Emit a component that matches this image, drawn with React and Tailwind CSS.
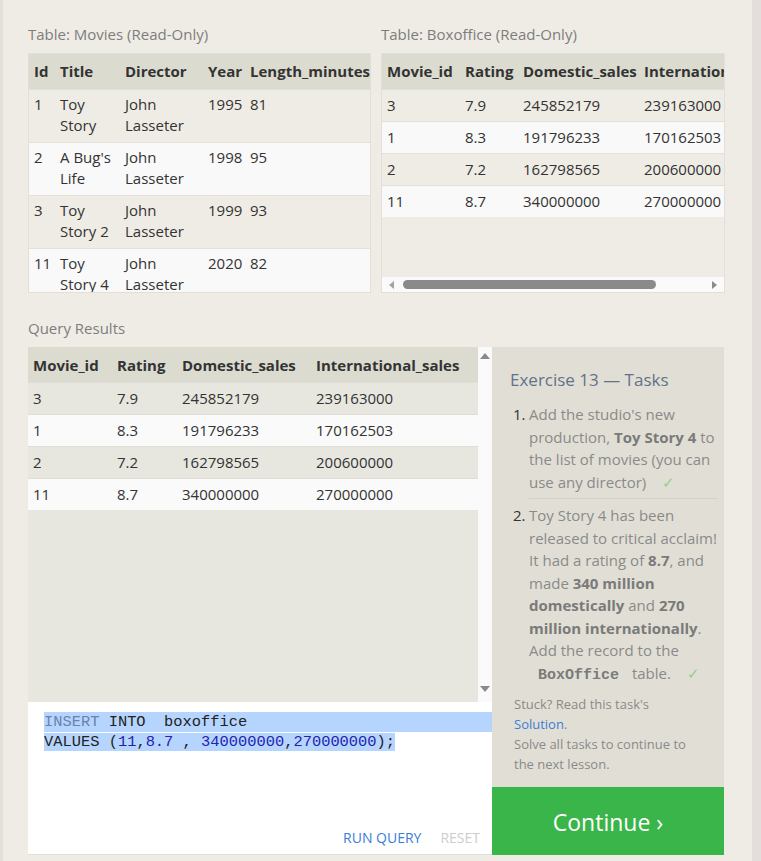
import React from 'react';

const MOVIES = [
  ['1', 'Toy Story', 'John Lasseter', '1995', '81'],
  ['2', "A Bug's Life", 'John Lasseter', '1998', '95'],
  ['3', 'Toy Story 2', 'John Lasseter', '1999', '93'],
  ['11', 'Toy Story 4', 'John Lasseter', '2020', '82'],
];

const BOXOFFICE = [
  ['3', '7.9', '245852179', '239163000'],
  ['1', '8.3', '191796233', '170162503'],
  ['2', '7.2', '162798565', '200600000'],
  ['11', '8.7', '340000000', '270000000'],
];

const sans = "font-['Open_Sans','Noto_Sans',sans-serif]";

function Label({ children }) {
  return <div className="mb-[8px] text-[15px] leading-[21px] text-[#7d7d7d]">{children}</div>;
}

function MoviesTable() {
  return (
    <div className="h-[240px] w-[343px] overflow-hidden border border-[#e2dfd8]">
      <table className="w-full table-fixed border-collapse text-[15px] leading-[21px] text-[#333]">
        <colgroup>
          <col className="w-[26px]" />
          <col className="w-[65px]" />
          <col className="w-[83px]" />
          <col className="w-[42px]" />
          <col />
        </colgroup>
        <thead>
          <tr className="bg-[#dcdbd0] text-left font-bold">
            {['Id', 'Title', 'Director', 'Year', 'Length_minutes'].map((h) => (
              <th key={h} className="whitespace-nowrap py-[7px] pl-[5px] pr-0 align-top">
                {h}
              </th>
            ))}
          </tr>
        </thead>
        <tbody>
          {MOVIES.map((row, i) => (
            <tr key={row[0]} className={`border-t border-[#e2e0d9] ${i % 2 ? 'bg-[#f9f9f9]' : 'bg-[#efece5]'}`}>
              {row.map((c, j) => (
                <td key={j} className="pb-[6px] pl-[5px] pr-[2px] pt-[4px] align-top">
                  {c}
                </td>
              ))}
            </tr>
          ))}
        </tbody>
      </table>
    </div>
  );
}

function BoxofficeTable() {
  return (
    <div className="flex h-[240px] w-[344px] flex-col border border-[#e2dfd8]">
      <div className="flex-1 overflow-hidden">
        <table className="w-[420px] table-fixed border-collapse text-[15px] leading-[21px] text-[#333]">
          <colgroup>
            <col className="w-[78px]" />
            <col className="w-[58px]" />
            <col className="w-[121px]" />
            <col />
          </colgroup>
          <thead>
            <tr className="bg-[#dcdbd0] text-left font-bold">
              {['Movie_id', 'Rating', 'Domestic_sales', 'International_sales'].map((h) => (
                <th key={h} className="whitespace-nowrap py-[7px] pl-[5px] pr-0">
                  {h}
                </th>
              ))}
            </tr>
          </thead>
          <tbody>
            {BOXOFFICE.map((row, i) => (
              <tr key={row[0]} className={`border-t border-[#e2e0d9] ${i % 2 ? 'bg-[#f9f9f9]' : 'bg-[#efece5]'}`}>
                {row.map((c, j) => (
                  <td key={j} className="py-[5px] pl-[5px]">
                    {c}
                  </td>
                ))}
              </tr>
            ))}
          </tbody>
        </table>
      </div>
      {/* horizontal scrollbar */}
      <div className="flex h-[15px] items-center bg-[#fafafa] px-[6px]">
        <svg width="8" height="8" viewBox="0 0 8 8" className="mr-[7px]">
          <path d="M6 0 L6 8 L1 4 Z" fill="#a3a3a3" />
        </svg>
        <div className="h-[9px] w-[253px] rounded-full bg-[#8a8a8a]" />
        <div className="flex-1" />
        <svg width="8" height="8" viewBox="0 0 8 8">
          <path d="M2 0 L2 8 L7 4 Z" fill="#8a8a8a" />
        </svg>
      </div>
    </div>
  );
}

function ResultsTable() {
  return (
    <div className="flex h-[355px] bg-[#e8e7df]">
      <div className="flex-1 overflow-hidden">
        <table className="w-full table-fixed border-collapse text-[15px] leading-[21px] text-[#333]">
          <colgroup>
            <col className="w-[84px]" />
            <col className="w-[65px]" />
            <col className="w-[134px]" />
            <col />
          </colgroup>
          <thead>
            <tr className="bg-[#dcdbd0] text-left font-bold">
              {['Movie_id', 'Rating', 'Domestic_sales', 'International_sales'].map((h) => (
                <th key={h} className="whitespace-nowrap pb-[6px] pl-[5px] pt-[8px]">
                  {h}
                </th>
              ))}
            </tr>
          </thead>
          <tbody>
            {BOXOFFICE.map((row, i) => (
              <tr key={row[0]} className={`border-t border-[#dfddd5] ${i % 2 ? 'bg-[#fafafa]' : 'bg-[#e8e7df]'}`}>
                {row.map((c, j) => (
                  <td key={j} className="py-[5px] pl-[5px]">
                    {c}
                  </td>
                ))}
              </tr>
            ))}
          </tbody>
        </table>
      </div>
      {/* vertical scrollbar */}
      <div className="flex w-[14px] flex-col items-center justify-between bg-[#fafafa] pb-[9px] pt-[5px]">
        <svg width="10" height="8" viewBox="0 0 10 8">
          <path d="M0 7 L10 7 L5 1 Z" fill="#8a8a8a" />
        </svg>
        <svg width="10" height="8" viewBox="0 0 10 8">
          <path d="M0 1 L10 1 L5 7 Z" fill="#8a8a8a" />
        </svg>
      </div>
    </div>
  );
}

function Editor() {
  return (
    <div className="flex h-[153px] flex-col border-b border-[#e2dfd8] bg-white">
      <div className="pl-[16px] pt-[10px] font-['Liberation_Mono',monospace] text-[15.4px] leading-[20px] text-[#222]">
        <div className="whitespace-pre bg-[#b5d5fe]">
          <span className="text-[#6a82ac]">INSERT</span> INTO  boxoffice
        </div>
        <div className="whitespace-pre">
          <span className="bg-[#b5d5fe]">
            VALUES (<span className="text-[#2323b0]">11</span>,<span className="text-[#2323b0]">8.7</span> , <span className="text-[#2323b0]">340000000</span>,<span className="text-[#2323b0]">270000000</span>);
          </span>
        </div>
      </div>
      <div className="flex-1" />
      <div className="flex justify-end gap-[19px] pb-[6px] pr-[12px] text-[14px] leading-[20px]">
        <span className="text-[#3b7dd8]">RUN QUERY</span>
        <span className="text-[#cdcdcd]">RESET</span>
      </div>
    </div>
  );
}

function Check() {
  return <span className="ml-[12px] text-[#8fd08f]">✓</span>;
}

function Tasks() {
  return (
    <div className="flex w-[232px] flex-col">
      <div className="flex-1 bg-[#e1dfd5] pl-[18px] pr-[6px] pt-[21px]">
        <div className="text-[17px] leading-[24px] text-[#62728a]">Exercise 13 — Tasks</div>
        <ol className="mt-[11px] text-[15px] leading-[22.5px] text-[#8a8a8a]">
          <li className="flex">
            <span className="w-[19px] shrink-0 pl-[3px] text-[#333]">1.</span>
            <div className="border-b border-[#d4d2c8] pb-[5px]">
              Add the studio's new production, <b className="text-[#7a7a7a]">Toy Story 4</b> to the list of movies (you can
              use any director) <Check />
            </div>
          </li>
          <li className="flex pt-[5px]">
            <span className="w-[19px] shrink-0 pl-[3px] text-[#333]">2.</span>
            <div>
              Toy Story 4 has been released to critical acclaim! It had a rating of{' '}
              <b className="text-[#7a7a7a]">8.7</b>, and made <b className="text-[#7a7a7a]">340 million domestically</b> and{' '}
              <b className="text-[#7a7a7a]">270 million internationally</b>. Add the record to the{' '}
              <b className="font-['Liberation_Mono',monospace] text-[#7a7a7a]">&nbsp;BoxOffice&nbsp;</b> table. <Check />
            </div>
          </li>
        </ol>
        <div className="mt-[7px] w-[184px] pl-[4px] text-[13px] leading-[20px] text-[#8a8a8a]">
          Stuck? Read this task's <span className="text-[#3b7dd8]">Solution</span>.
          <br />
          Solve all tasks to continue to the next lesson.
        </div>
      </div>
      <div className="flex h-[68px] items-center justify-center bg-[#3ab54a] pt-[3px] text-[23px] text-white">
        Continue ›
      </div>
    </div>
  );
}

export default function App() {
  return (
    <div className={`flex min-h-screen bg-[#efece5] ${sans}`}>
      <div className="w-[3px] shrink-0 bg-[#e3dfda]" />
      <div className="w-[724px] shrink-0 pl-[25px] pt-[24px]">
        <div className="flex gap-[10px]">
          <div>
            <Label>Table: Movies (Read-Only)</Label>
            <MoviesTable />
          </div>
          <div>
            <Label>Table: Boxoffice (Read-Only)</Label>
            <BoxofficeTable />
          </div>
        </div>
        <div className="mt-[25px]">
          <Label>Query Results</Label>
          <div className="mt-[1px] flex">
            <div className="flex w-[464px] flex-col">
              <ResultsTable />
              <Editor />
            </div>
            <Tasks />
          </div>
        </div>
      </div>
      <div className="flex-1" />
      <div className="w-[9px] shrink-0 bg-[#e3dedb]" />
    </div>
  );
}
